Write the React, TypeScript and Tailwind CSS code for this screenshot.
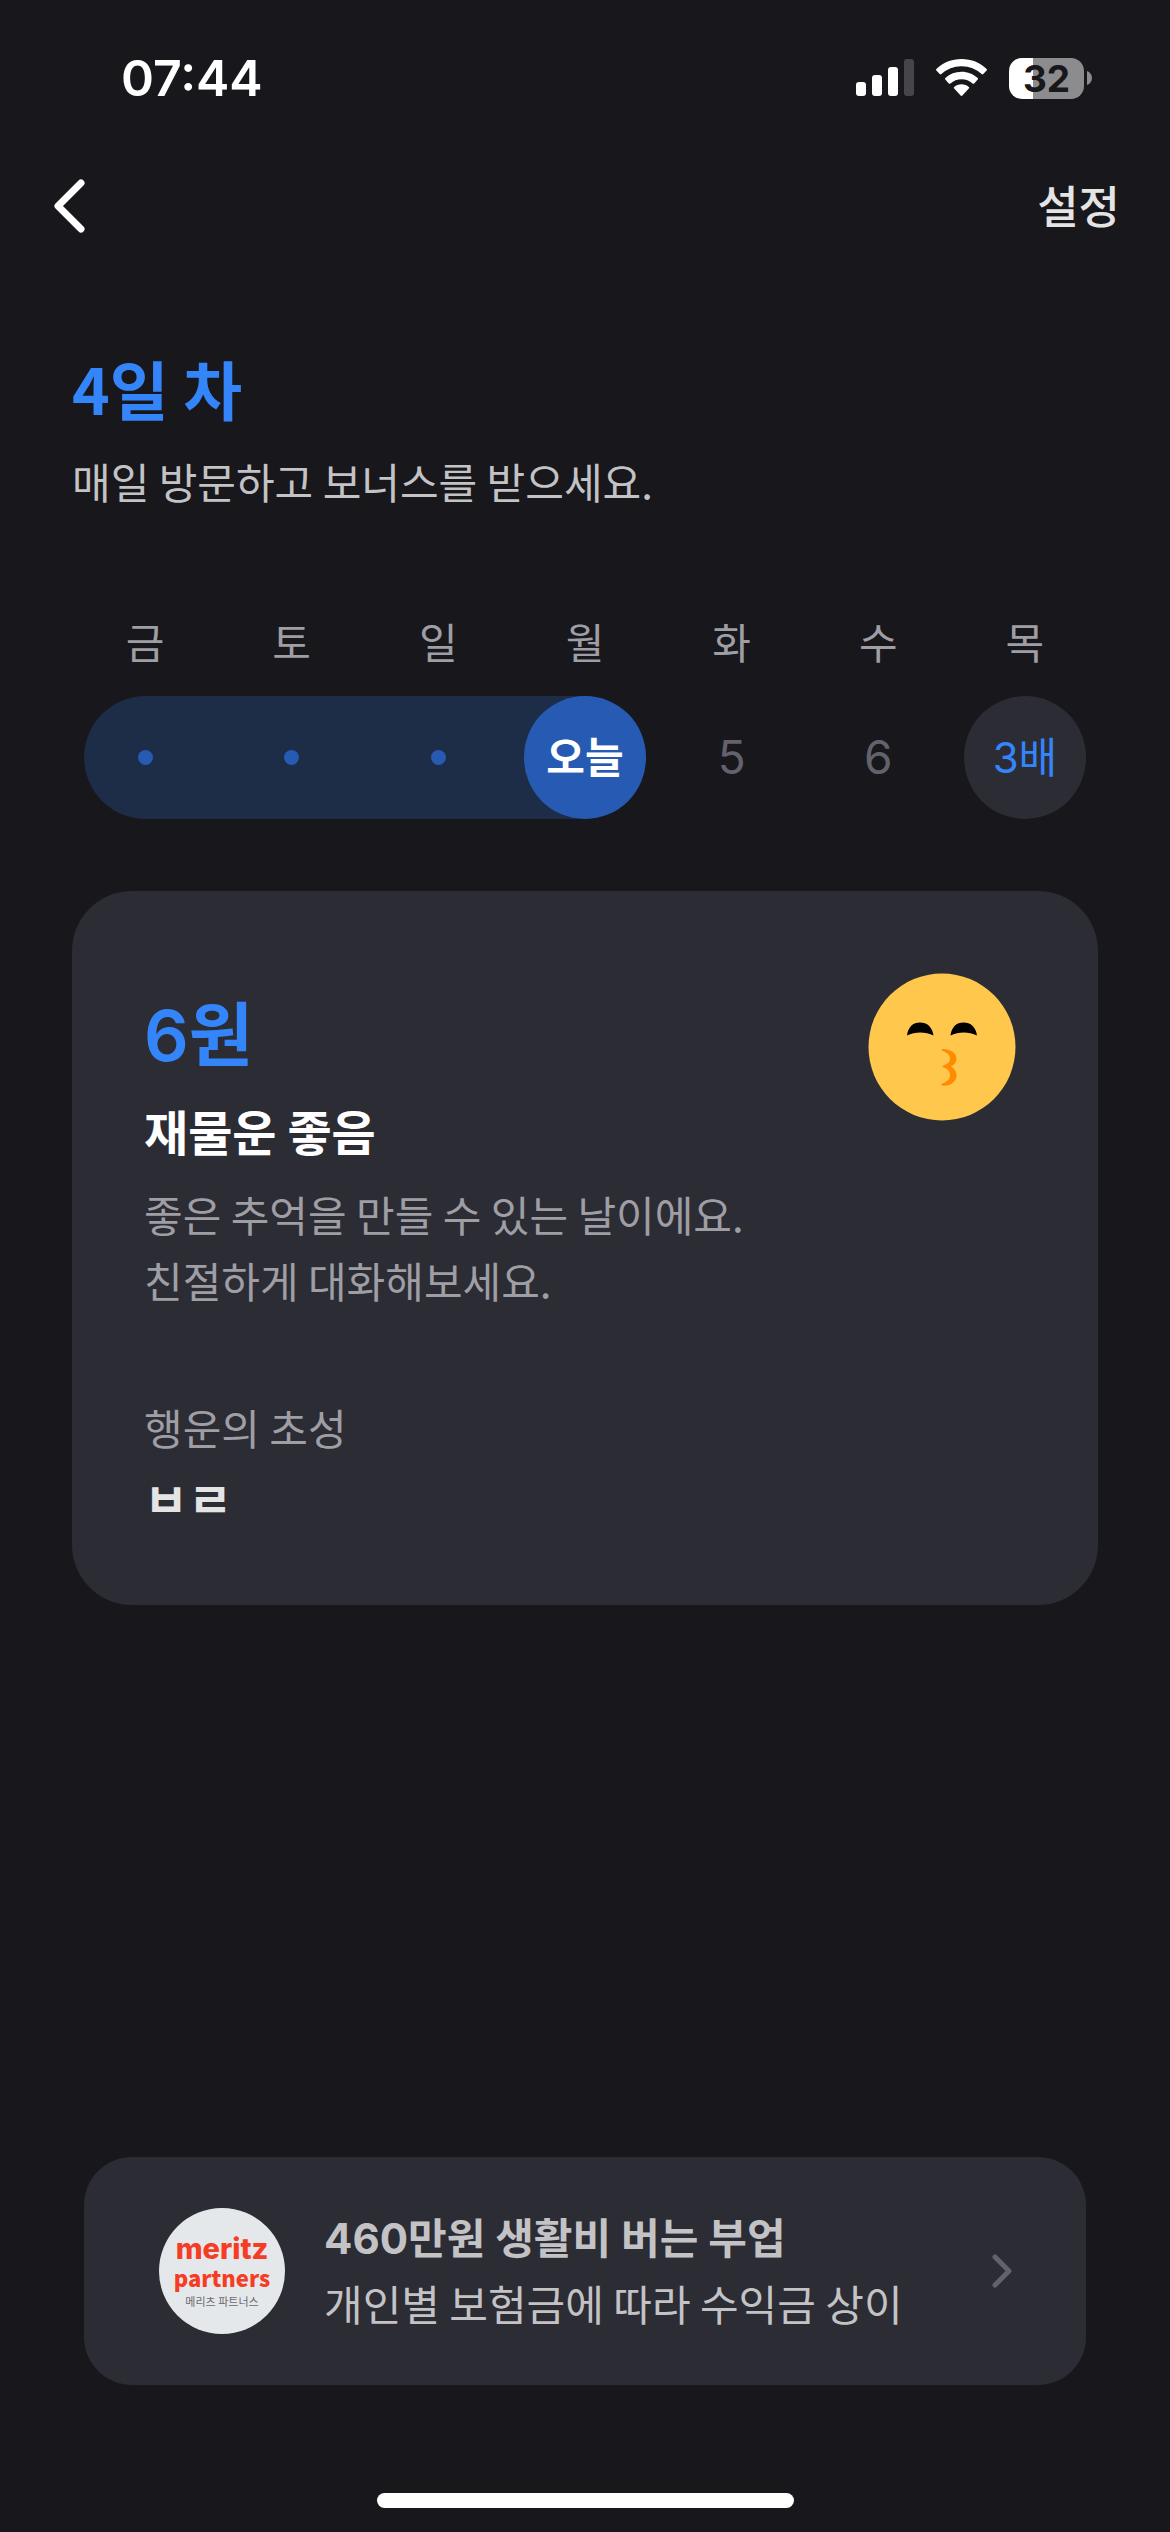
const DAYS = [
  { name: "금", state: "done", label: "" },
  { name: "토", state: "done", label: "" },
  { name: "일", state: "done", label: "" },
  { name: "월", state: "today", label: "오늘" },
  { name: "화", state: "upcoming", label: "5" },
  { name: "수", state: "upcoming", label: "6" },
  { name: "목", state: "bonus", label: "3배" },
];

const NUM_FONT = "font-['Inter','Noto_Sans_CJK_KR',sans-serif]";

const dayStyles: Record<string, string> = {
  done: "",
  today: "bg-[#265ab3] text-white font-bold",
  upcoming: "text-[#62626d] text-[46px]",
  bonus: "bg-[#2c2c35] text-[#3485fa]",
};

const StatusBar = () => (
  <div className="flex h-[156px] items-center justify-between pl-[121px] pr-[78px]">
    <span className="font-['Inter',sans-serif] text-[50px] leading-[60px] font-semibold text-white">
      07:44
    </span>
    <div className="flex items-center gap-[22px]">
      <svg width="58" height="38" viewBox="0 0 58 38" fill="#fff" aria-hidden="true">
        <rect x="0" y="23" width="10" height="14" rx="3" />
        <rect x="16" y="16" width="10" height="21" rx="3" />
        <rect x="32" y="8" width="10" height="29" rx="3" />
        <rect x="48" y="0" width="10" height="37" rx="3" fill="#464549" />
      </svg>
      <svg width="51" height="38" viewBox="0 0 51 38" fill="#fff" aria-hidden="true">
        <path d="M25.5 0C35.3 0 44.2 3.7 50.6 9.9c.5.5.5 1.1 0 1.6l-3.3 3.6c-.5.5-1.2.5-1.7 0A29 29 0 0 0 25.5 7.200 29 29 0 0 0 5.400 15.100c-.5.5-1.200.5-1.700 0L.4 11.500c-.5-.5-.5-1.100 0-1.600C6.800 3.700 15.700 0 25.500 0z" />
        <path d="M25.500 12.700c6.200 0 11.900 2.400 16.200 6.300.5.5.5 1.100 0 1.600l-3.500 3.800c-.5.5-1.100.5-1.600.1a16.500 16.500 0 0 0-22.200 0c-.5.400-1.100.400-1.600-.1l-3.500-3.800c-.5-.5-.5-1.100 0-1.600a24 24 0 0 1 16.200-6.300z" />
        <path d="M25.500 25.300c2.800 0 5.300 1 7.300 2.700.5.400.5 1.100 0 1.600l-6.400 7c-.5.5-1.300.5-1.800 0l-6.400-7c-.5-.5-.5-1.200 0-1.600 2-1.700 4.500-2.700 7.300-2.700z" />
      </svg>
      <div className="flex items-center gap-[3px]">
        <div className="flex h-[41px] w-[75px] items-center justify-center rounded-[13px] bg-[linear-gradient(90deg,#fff_24px,#8c8b8e_24px)] font-['Inter',sans-serif] text-[37px] leading-[41px] font-bold text-[#18171c]">
          32
        </div>
        <svg width="5" height="14" viewBox="0 0 5 14" fill="#8c8b8e" aria-hidden="true">
          <path d="M0 0c3 1 5 3.800 5 7s-2 6-5 7z" />
        </svg>
      </div>
    </div>
  </div>
);

const Header = () => (
  <header className="flex h-[100px] items-center justify-between px-[50px]">
    <button type="button" aria-label="뒤로" className="flex h-[60px] w-[40px] items-center">
      <svg width="38" height="54" viewBox="0 0 38 54" fill="none" aria-hidden="true">
        <path d="M31 4 8 27l23 23" stroke="#fff" strokeWidth="7" strokeLinecap="round" strokeLinejoin="round" />
      </svg>
    </button>
    <button
      type="button"
      className={`pt-[4px] text-[45px] leading-[60px] font-medium text-[#e4e4e5] ${NUM_FONT}`}
    >
      설정
    </button>
  </header>
);

const Week = () => (
  <section className="mx-[84px] mt-[100px]">
    <div className="flex justify-between text-[42px] leading-[60px] text-[#9e9ea4]">
      {DAYS.map((day) => (
        <span key={day.name} className="w-[122px] text-center">
          {day.name}
        </span>
      ))}
    </div>
    <div className="relative mt-[25px]">
      {/* streak track, ends under today's circle */}
      <div className="absolute inset-y-0 left-0 w-[56%] rounded-full bg-[#1d2c47]" />
      <div className={`relative flex justify-between text-[42px] ${NUM_FONT}`}>
        {DAYS.map((day) => (
          <div
            key={day.name}
            className={`flex h-[123px] w-[122px] items-center justify-center rounded-full ${dayStyles[day.state]}`}
          >
            {day.state === "done" ? <i className="size-[15px] rounded-full bg-[#265ab3]" /> : day.label}
          </div>
        ))}
      </div>
    </div>
  </section>
);

const KissFace = () => (
  <svg width="148" height="148" viewBox="0 0 148 148" className="shrink-0" aria-hidden="true">
    <circle cx="74" cy="74" r="73.500" fill="#ffc84d" />
    <path d="M39 62.500C40 54 45 49.500 52 49.500s12.500 4.500 13.500 13c-8-4-18.500-4-26.500 0z" />
    <path d="M82.500 62.500C83.500 54 88.500 49.500 95.500 49.500s12.500 4.500 13.500 13c-8-4-18.500-4-26.500 0z" />
    <path
      d="M74 76c8-.5 14.500 4 14.500 9.500 0 3.500-2 6.500-5.500 8 3.500 2 5.500 5 5.500 9 0 6.500-6.500 11-14.500 10-1-.3-1-1.300 0-1.800 5.500-2 8-5 8-8.500 0-4-2.500-6.500-7-8-.8-.3-.8-1.200 0-1.500 4.500-1.700 7-3.700 7-7 0-3.500-3-6.500-7.500-8-1-.4-1.300-1.500-.5-1.700z"
      fill="#ff8c00"
    />
  </svg>
);

const FortuneCard = () => (
  <section className="mx-[72px] mt-[72px] flex items-start justify-between rounded-[60px] bg-[#2c2c35] pt-[82px] pr-[82px] pb-[75px] pl-[72px]">
    <div className="pt-[21px]">
      <h2 className={`text-[70px] leading-[84px] font-semibold text-[#3485fa] ${NUM_FONT}`}>6원</h2>
      <p className="mt-[22px] text-[48px] leading-[60px] font-bold text-white">재물운 좋음</p>
      <p className="mt-[21px] text-[42px] leading-[66px] text-[#9e9ea4]">
        좋은 추억을 만들 수 있는 날이에요.
        <br />
        친절하게 대화해보세요.
      </p>
      <p className="mt-[84px] text-[42px] leading-[60px] text-[#9e9ea4]">행운의 초성</p>
      <p className="mt-[7px] text-[48px] leading-[66px] font-bold text-[#e4e4e5]">ㅂㄹ</p>
    </div>
    <KissFace />
  </section>
);

const AdBanner = () => (
  <a href="#" className="mx-[84px] mt-auto flex h-[228px] items-center rounded-[48px] bg-[#2c2c35] pr-[72px] pl-[75px]">
    <div className="flex size-[126px] shrink-0 flex-col items-center justify-center rounded-full bg-[#e5e8eb] pt-[4px]">
      <span className="font-['Inter',sans-serif] text-[29px] leading-[30px] font-extrabold text-[#f53d26]">meritz</span>
      <span className="text-[22px] leading-[26px] font-black text-[#f53d26]">partners</span>
      <span className="text-[11px] leading-[22px] text-[#6b6b70]">메리츠 파트너스</span>
    </div>
    <div className="ml-[39px] flex-1 text-[42px] leading-[64px] text-[#c3c3c6]">
      <p className={`font-bold ${NUM_FONT}`}>460만원 생활비 버는 부업</p>
      <p>개인별 보험금에 따라 수익금 상이</p>
    </div>
    <svg width="24" height="38" viewBox="0 0 24 38" fill="none" aria-hidden="true">
      <path d="m5 5 14 14L5 33" stroke="#62626d" strokeWidth="5" strokeLinecap="round" strokeLinejoin="round" />
    </svg>
  </a>
);

const App = () => {
  return (
    <div className="flex min-h-screen flex-col bg-[#18171c] font-['Noto_Sans_CJK_KR',sans-serif]">
      <StatusBar />
      <Header />
      <main className="flex flex-1 flex-col">
        <div className="mt-[91px] px-[72px]">
          <h1 className="text-[64px] leading-[80px] font-bold text-[#3485fa]">4일 차</h1>
          <p className="mt-[24px] text-[42px] leading-[60px] text-[#c3c3c6]">매일 방문하고 보너스를 받으세요.</p>
        </div>
        <Week />
        <FortuneCard />
        <AdBanner />
      </main>
      {/* home indicator */}
      <div className="mt-[108px] mb-[24px] h-[15px] w-[417px] self-center rounded-full bg-white" />
    </div>
  );
};

export default App;
